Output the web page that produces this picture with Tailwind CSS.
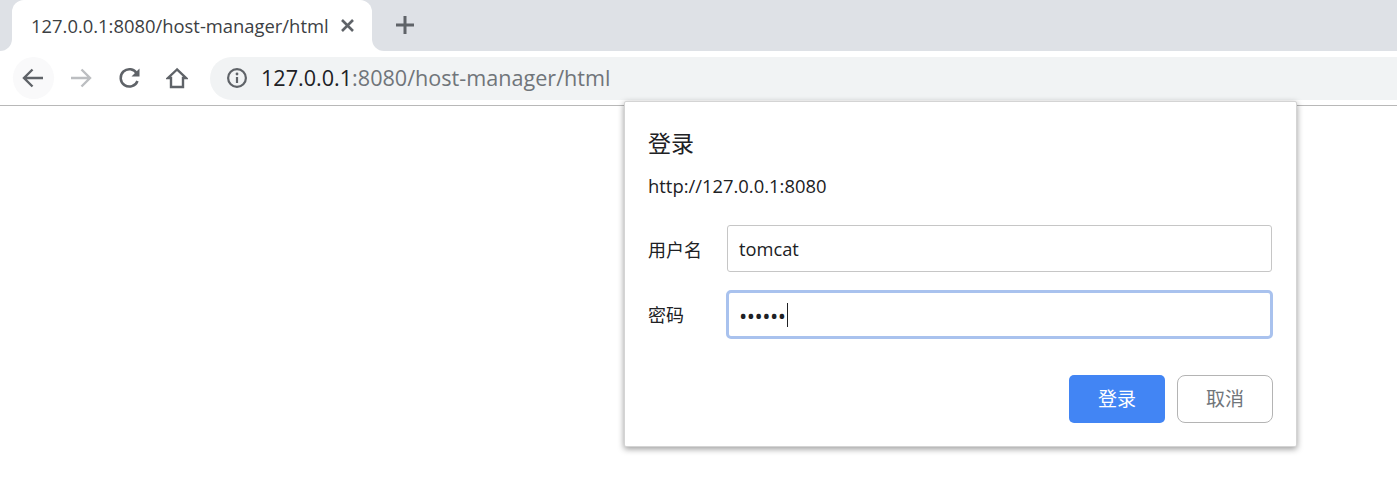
<!DOCTYPE html>
<html lang="zh-CN">

<head>
    <meta charset="UTF-8">
    <title>127.0.0.1:8080/host-manager/html</title>
    <script src="https://cdn.jsdelivr.net/npm/@tailwindcss/browser@4"></script>
</head>

<body class="bg-white font-['Open_Sans','Noto_Sans_CJK_SC',sans-serif] overflow-hidden">

    <div class="relative h-[486px] w-[1397px]">

        <!-- tab strip -->
        <div class="h-[51px] bg-[#dee1e6] flex items-end">
            <div class="relative ml-3 h-[51px] w-[360px] bg-white rounded-t-[12px] flex items-center pl-[19px]">
                <div class="absolute left-[-12px] bottom-0 w-3 h-3 bg-white">
                    <div class="w-3 h-3 bg-[#dee1e6] rounded-br-[12px]"></div>
                </div>
                <div class="absolute right-[-12px] bottom-0 w-3 h-3 bg-white">
                    <div class="w-3 h-3 bg-[#dee1e6] rounded-bl-[12px]"></div>
                </div>
                <span class="text-[18.4px] leading-none pt-px text-[#3c4043] whitespace-nowrap w-[298px]">127.0.0.1:8080/host-manager/html</span>
                <svg class="ml-[11px]" width="15" height="15" viewBox="0 0 15 15" fill="none" stroke="#5f6368" stroke-width="2.6">
                    <path d="M2 2l11 11M13 2L2 13" />
                </svg>
            </div>
            <svg class="ml-[24px] mb-[17px]" width="18" height="18" viewBox="0 0 18 18" fill="none" stroke="#5f6368" stroke-width="3">
                <path d="M9 0v18M0 9h18" />
            </svg>
        </div>

        <!-- toolbar -->
        <div class="h-[55px] bg-white border-b border-[#b8b8b8] flex items-center pl-[13px]">
            <div class="w-[41px] h-[42px] rounded-full bg-[#f9f9fa] flex items-center justify-center pr-[2px]">
                <svg width="22" height="20" viewBox="0 0 22 20" fill="none" stroke="#5f6368" stroke-width="2.4">
                    <path d="M21 10H2M10.500 1.500L2 10l8.500 8.500" />
                </svg>
            </div>
            <div class="w-[54px] flex justify-center">
                <svg width="22" height="20" viewBox="0 0 22 20" fill="none" stroke="#bcbec1" stroke-width="2.4">
                    <path d="M1 10h19M11.500 1.500L20 10l-8.500 8.500" />
                </svg>
            </div>
            <div class="w-[44px] flex justify-center">
                <svg width="22" height="22" viewBox="0 0 22 22" fill="none" stroke="#5f6368" stroke-width="2.500">
                    <path d="M18.500 14a8.700 8.700 0 1 1-.6-7.500" />
                    <path d="M20.500 1.500v8h-8z" fill="#5f6368" stroke="none" />
                </svg>
            </div>
            <div class="w-[50px] flex justify-center">
                <svg width="22" height="22" viewBox="0 0 22 22" fill="none" stroke="#5f6368" stroke-width="2.400" stroke-linejoin="miter">
                    <path d="M11 2.500L2 11h3v9h12v-9h3z" />
                </svg>
            </div>
            <div class="ml-[8px] flex-1 h-[43px] bg-[#f1f3f4] rounded-l-[22px] flex items-center pl-[17px]">
                <svg width="20" height="20" viewBox="0 0 20 20" fill="none">
                    <circle cx="10" cy="10" r="8.900" stroke="#5f6368" stroke-width="2.200" />
                    <path d="M10 9v6" stroke="#5f6368" stroke-width="2.200" />
                    <circle cx="10" cy="6" r="1.400" fill="#5f6368" />
                </svg>
                <span class="ml-[14px] text-[21.6px] leading-none whitespace-nowrap text-[#70757a]"><span class="text-[#202124]">127.0.0.1</span>:8080/host-manager/html</span>
            </div>
        </div>

        <!-- login dialog, over the page -->
        <div class="absolute left-[624px] top-[101px] w-[673px] h-[346px] bg-white rounded-[2px] border border-[#d4d4d4] shadow-[0_2px_6px_rgba(0,0,0,0.4)] pl-[23px] pr-[23px] pt-[25px] text-[#202124]">
            <h2 class="text-[23px] leading-[32px]">登录</h2>
            <p class="mt-[15px] text-[18.4px] leading-[24px]">http://127.0.0.1:8080</p>

            <div class="mt-[27px] flex items-center">
                <label class="w-[79px] text-[18px] leading-[26px] pt-[2px]">用户名</label>
                <div class="w-[545px] h-[47px] border border-[#c6c6c6] rounded-[3px] flex items-center pl-[11px] text-[18.3px]">tomcat</div>
            </div>

            <div class="mt-[18px] flex items-center">
                <label class="w-[78px] text-[18px] leading-[26px]">密码</label>
                <div class="w-[547px] h-[49px] border-[3px] border-[#a9c2ee] rounded-[5px] flex items-center pl-[10px]">
                    <span class="text-[22px] leading-none tracking-[-0.5px]">••••••</span>
                    <span class="ml-[1px] w-px h-[24px] bg-[#202124]"></span>
                </div>
            </div>

            <div class="mt-[36px] flex justify-end gap-3">
                <button class="w-[96px] h-[48px] rounded-[5px] bg-[#4285f4] text-white text-[19px]">登录</button>
                <button class="w-[96px] h-[48px] rounded-[8px] border border-[#b4b4b4] bg-white text-[#70757a] text-[19px]">取消</button>
            </div>
        </div>
    </div>

</body>

</html>
